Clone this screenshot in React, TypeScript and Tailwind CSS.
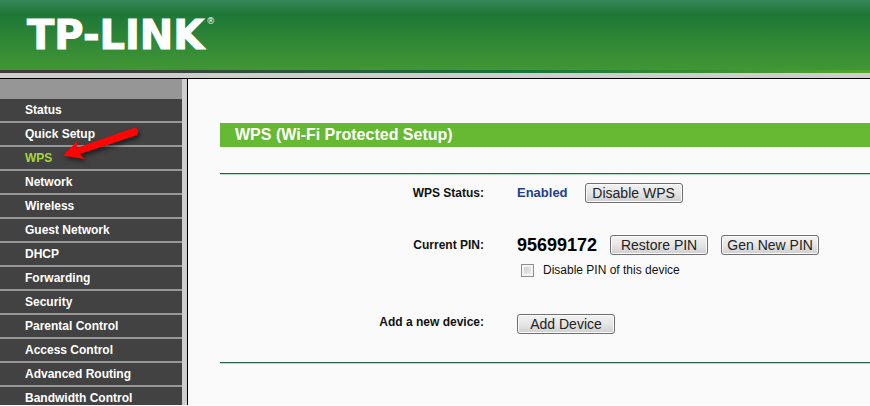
import type { ReactNode } from "react";

const menu = [
  "Status",
  "Quick Setup",
  "WPS",
  "Network",
  "Wireless",
  "Guest Network",
  "DHCP",
  "Forwarding",
  "Security",
  "Parental Control",
  "Access Control",
  "Advanced Routing",
  "Bandwidth Control",
];

const Button = ({ children }: { children: ReactNode }) => {
  return (
    <button
      type="button"
      className="h-5 w-[98px] shrink-0 whitespace-nowrap rounded-[3px] border border-[#707070] bg-linear-to-b from-[#f2f2f2] from-0% via-[#e6e6e6] via-50% to-[#cfcfcf] to-100% text-center text-[14px] leading-[18px] text-[#222] shadow-[inset_0_0_0_1px_#fafafa]"
    >
      {children}
    </button>
  );
};

const Header = () => {
  return (
    <header className="shrink-0 border-b border-black">
      <div className="flex h-[70px] items-center bg-linear-to-b from-[#36875a] from-0% via-[#1d7836] via-20% to-[#419734] to-100% pl-[27px]">
        <h1 className="flex items-start font-['DejaVu_Sans'] text-[40px] font-bold leading-[40px] text-white [-webkit-text-stroke:1px_white]">
          TP-LINK
          <span className="pl-[2px] text-[9px] font-normal leading-[12px] [-webkit-text-stroke:0]">
            ®
          </span>
        </h1>
      </div>
      <div className="h-[3px] bg-linear-to-r/srgb from-[#403a3c] from-10% via-[#18743a] via-60% to-[#56a52e] to-100%" />
      <div className="h-[5px] bg-[#cecece]" />
    </header>
  );
};

const Arrow = () => {
  return (
    <svg
      className="pointer-events-none absolute left-[60px] top-[45px] drop-shadow-[2px_3px_2px_rgba(0,0,0,0.5)]"
      width="82"
      height="38"
      viewBox="60 124 82 38"
      aria-hidden="true"
    >
      <path
        d="M63 155.5 L77.5 141 L76.5 148 L133.5 128 Q137 127 138 130.500 Q138.500 134 136 135.500 L80 154 L85 159.300 Z"
        fill="#fb0505"
      />
    </svg>
  );
};

const Sidebar = () => {
  return (
    <nav className="relative w-[188px] shrink-0 border-r border-black bg-[#cecece] pr-[5px]">
      <div className="h-full bg-[#969696] pt-5">
        <ul>
          {menu.map((item) => (
            <li key={item} className="mb-[2px] bg-[#424242]">
              <a
                href="#"
                className={
                  item === "WPS"
                    ? "block pl-[25px] text-[12px] font-bold leading-[22px] text-[#a5d837]"
                    : "block pl-[25px] text-[12px] font-bold leading-[22px] text-white"
                }
              >
                {item}
              </a>
            </li>
          ))}
        </ul>
      </div>
      <Arrow />
    </nav>
  );
};

const Row = ({ label, children }: { label: string; children: ReactNode }) => {
  return (
    <div className="grid grid-cols-[264px_1fr] gap-[33px]">
      <div className="text-right text-[12px] font-bold leading-5 text-[#111]">
        {label}
      </div>
      <div>{children}</div>
    </div>
  );
};

const Divider = () => {
  return <hr className="h-[2px] border-0 border-t border-[#28624c] bg-[#b5dcc5]" />;
};

export default function App() {
  return (
    <div className="flex h-screen flex-col overflow-hidden border-b border-white bg-[#fafafa] font-['Liberation_Sans',Arial,sans-serif]">
      <Header />
      <div className="flex min-h-0 flex-1">
        <Sidebar />
        <main className="min-w-0 flex-1 pl-8 pt-11">
          <h2 className="bg-[#66b933] pl-[15px] text-[16px] font-bold leading-6 text-white">
            WPS (Wi-Fi Protected Setup)
          </h2>
          <div className="pt-[26px]">
            <Divider />
            <div className="flex flex-col gap-8 pb-[26px] pt-2">
              <Row label="WPS Status:">
                <div className="flex items-center gap-[17px]">
                  <span className="text-[13px] font-bold leading-5 text-[#213f8c]">
                    Enabled
                  </span>
                  <Button>Disable WPS</Button>
                </div>
              </Row>
              <Row label="Current PIN:">
                <div className="flex items-center gap-[13px]">
                  <span className="text-[18px] font-bold leading-5 text-black">
                    95699172
                  </span>
                  <Button>Restore PIN</Button>
                  <Button>Gen New PIN</Button>
                </div>
                <div className="mt-[5px] flex items-center gap-[9px] pl-1">
                  <input
                    id="disable-pin"
                    type="checkbox"
                    className="size-[13px] appearance-none border border-[#8e8f8f] bg-linear-to-br from-[#c4c7cb] to-[#f6f6f6] shadow-[inset_0_0_0_2px_#f4f4f4]"
                  />
                  <label
                    htmlFor="disable-pin"
                    className="text-[12px] leading-5 text-[#111]"
                  >
                    Disable PIN of this device
                  </label>
                </div>
              </Row>
              <Row label="Add a new device:">
                <Button>Add Device</Button>
              </Row>
            </div>
            <Divider />
          </div>
        </main>
      </div>
    </div>
  );
}
